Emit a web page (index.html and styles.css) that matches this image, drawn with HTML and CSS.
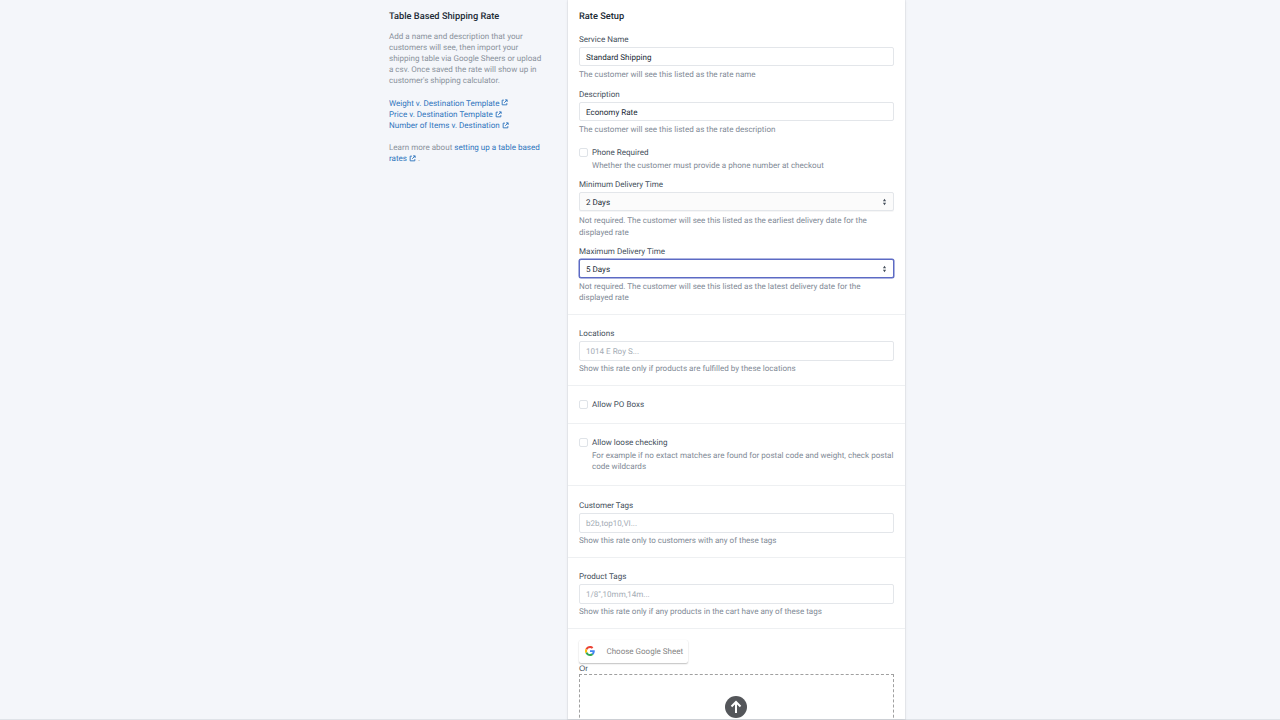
FILE: index.html
```html
<!DOCTYPE html>
<html lang="en">
  <head>
    <meta charset="UTF-8" />
    <meta name="viewport" content="width=device-width, initial-scale=1.0" />
    <title>Rate Setup</title>
    <link rel="stylesheet" href="styles.css">
  </head>
  <body>
    <div class="page">
      <div class="intro">
        <h2 class="intro-title">Table Based Shipping Rate</h2>
        <p class="intro-text">Add a name and description that your customers will see, then import your shipping table via Google Sheers or upload a csv. Once saved the rate will show up in customer's shipping calculator.</p>
        <ul class="intro-links">
          <li><a href="#">Weight v. Destination Template <svg class="ext" viewBox="0 0 12 12"><path d="M5 2H2v8h8V7M7 1.500h3.500V5M10.500 1.500L5.500 6.500"/></svg></a></li>
          <li><a href="#">Price v. Destination Template <svg class="ext" viewBox="0 0 12 12"><path d="M5 2H2v8h8V7M7 1.500h3.500V5M10.500 1.500L5.500 6.500"/></svg></a></li>
          <li><a href="#">Number of Items v. Destination <svg class="ext" viewBox="0 0 12 12"><path d="M5 2H2v8h8V7M7 1.500h3.500V5M10.500 1.500L5.500 6.500"/></svg></a></li>
        </ul>
        <p class="intro-text intro-learn">Learn more about <a href="#">setting up a table based rates <svg class="ext" viewBox="0 0 12 12"><path d="M5 2H2v8h8V7M7 1.500h3.500V5M10.500 1.500L5.500 6.500"/></svg></a> .</p>
      </div>

      <div class="card">
        <div class="section section-first">
          <h2 class="card-title">Rate Setup</h2>
          <div class="field">
            <div class="label">Service Name</div>
            <div class="input">Standard Shipping</div>
            <div class="help">The customer will see this listed as the rate name</div>
          </div>
          <div class="field">
            <div class="label">Description</div>
            <div class="input">Economy Rate</div>
            <div class="help">The customer will see this listed as the rate description</div>
          </div>
          <div class="check check-tight">
            <span class="box"></span>
            <div>
              <div class="check-label">Phone Required</div>
              <div class="help">Whether the customer must provide a phone number at checkout</div>
            </div>
          </div>
          <div class="field field-min">
            <div class="label">Minimum Delivery Time</div>
            <div class="input select">2 Days
              <svg class="updown" viewBox="0 0 6 10"><path d="M3 1l2 3H1zM3 9L1 6h4z"/></svg>
            </div>
            <div class="help">Not required. The customer will see this listed as the earliest delivery date for the displayed rate</div>
          </div>
          <div class="field field-max">
            <div class="label">Maximum Delivery Time</div>
            <div class="input select select-focus">5 Days
              <svg class="updown" viewBox="0 0 6 10"><path d="M3 1l2 3H1zM3 9L1 6h4z"/></svg>
            </div>
            <div class="help">Not required. The customer will see this listed as the latest delivery date for the displayed rate</div>
          </div>
        </div>

        <div class="section">
          <div class="label">Locations</div>
          <div class="input placeholder">1014 E Roy S...</div>
          <div class="help">Show this rate only if products are fulfilled by these locations</div>
        </div>

        <div class="section section-po">
          <div class="check">
            <span class="box"></span>
            <div class="check-label">Allow PO Boxs</div>
          </div>
        </div>

        <div class="section section-loose">
          <div class="check">
            <span class="box"></span>
            <div>
              <div class="check-label">Allow loose checking</div>
              <div class="help">For example if no extact matches are found for postal code and weight, check postal code wildcards</div>
            </div>
          </div>
        </div>

        <div class="section section-customer">
          <div class="label">Customer Tags</div>
          <div class="input placeholder">b2b,top10,VI...</div>
          <div class="help">Show this rate only to customers with any of these tags</div>
        </div>

        <div class="section">
          <div class="label">Product Tags</div>
          <div class="input placeholder">1/8",10mm,14m...</div>
          <div class="help">Show this rate only if any products in the cart have any of these tags</div>
        </div>

        <div class="section section-last">
          <div class="google-btn">
            <svg class="google-logo" viewBox="0 0 48 48">
              <path fill="#EA4335" d="M24 9.500c3.500 0 6.700 1.200 9.200 3.600l6.900-6.900C35.900 2.400 30.500 0 24 0 14.600 0 6.500 5.400 2.600 13.200l8 6.200C12.500 13.600 17.800 9.500 24 9.500z"/>
              <path fill="#4285F4" d="M47 24.500c0-1.600-.1-3.100-.4-4.500H24v9h12.900c-.6 3-2.300 5.500-4.800 7.200l7.700 6C44.300 38 47 31.800 47 24.500z"/>
              <path fill="#FBBC05" d="M10.600 28.600c-.5-1.400-.8-3-.8-4.600s.3-3.200.8-4.600l-8-6.200C.9 16.500 0 20.100 0 24s.9 7.500 2.600 10.800l8-6.200z"/>
              <path fill="#34A853" d="M24 48c6.500 0 11.900-2.100 15.900-5.800l-7.700-6c-2.200 1.500-4.900 2.300-8.100 2.300-6.200 0-11.500-4.200-13.400-9.900l-8 6.200C6.500 42.600 14.600 48 24 48z"/>
            </svg>
            <span>Choose Google Sheet</span>
          </div>
          <div class="or">Or</div>
          <div class="dropzone">
            <div class="upload-circle">
              <svg viewBox="0 0 22 22"><path d="M11 17V6M6.500 10.500L11 6l4.500 4.500"/></svg>
            </div>
          </div>
        </div>
      </div>
    </div>
  </body>
</html>
```

FILE: styles.css
```css
* {
  box-sizing: border-box;
}

html,
body {
  margin: 0;
  height: 720px;
  overflow: hidden;
}

body {
  background-color: #f4f6fa;
  font-family: Roboto, "Liberation Sans", sans-serif;
  font-size: 8.05px;
  line-height: 11.2px;
  color: #212b36;
  text-rendering: geometricPrecision;
}

a {
  color: #2f75bd;
  text-decoration: none;
}

.page {
  display: flex;
  height: 720px;
  padding-left: 389px;
  border-bottom: 1px solid #dfe3e8;
}

.intro {
  width: 156px;
  padding-top: 10.6px;
}

.intro-title,
.card-title {
  margin: 0;
  font-size: 9.25px;
  line-height: 12px;
  font-weight: 500;
  color: #212b36;
}

.intro-text {
  margin: 8px 0 0;
  color: #8a929c;
}

.intro-links {
  list-style: none;
  margin: 11.2px 0 0;
  padding: 0;
}

.intro-learn {
  margin-top: 10.8px;
}

.ext {
  width: 7px;
  height: 7px;
  fill: none;
  stroke: currentColor;
  stroke-width: 1.6;
  vertical-align: -0.5px;
}

.card {
  width: 337px;
  height: 719px;
  margin-left: 23px;
  background-color: #fff;
  box-shadow: 0 0 0 1px rgba(63, 63, 68, 0.05), 0 1px 3px 0 rgba(63, 63, 68, 0.1);
  overflow: hidden;
}

.section {
  padding: 13.4px 11px 10.6px;
  border-top: 1px solid #eef0f2;
}

.section-first {
  padding-top: 10.6px;
  padding-bottom: 10.8px;
  border-top: 0;
}

.section-po {
  padding-bottom: 12.4px;
}

.section-loose {
  padding-bottom: 12.7px;
}

.section-customer {
  padding-top: 14.4px;
}

.section-last {
  padding-top: 11px;
}

.field {
  margin-top: 9px;
}

.card-title + .field {
  margin-top: 11.4px;
}

.field-min {
  margin-top: 7.9px;
}

.field-max {
  margin-top: 8.1px;
}

.label {
  margin-bottom: 1.8px;
  color: #454f5b;
}

.input {
  position: relative;
  height: 19.5px;
  padding: 0 6px;
  line-height: 20px;
  border: 1px solid #e3e6ea;
  border-radius: 2px;
  background-color: #fff;
  color: #212b36;
}

.select {
  background-color: #fbfbfb;
  box-shadow: 0 1px 0 rgba(22, 29, 37, 0.04);
}

.select-focus {
  background-color: #fff;
  border-color: #5c6ac4;
  box-shadow: 0 0 0 0.5px #5c6ac4;
}

.placeholder {
  color: #a4acb5;
}

.updown {
  position: absolute;
  top: 5px;
  right: 6px;
  width: 5px;
  height: 8px;
  fill: #454f5b;
}

.help {
  margin-top: 2.3px;
  color: #7f8a96;
}

.field-min .help {
  margin-top: 4px;
}

.check .help {
  margin-top: 1.3px;
}

.check {
  display: flex;
  gap: 4px;
}

.check-tight {
  margin-top: 12.4px;
}

.box {
  flex: none;
  width: 9px;
  height: 9px;
  margin-top: 0.5px;
  border: 1px solid #dfe3e8;
  border-radius: 2px;
  background-color: #fff;
}

.check-label {
  color: #454f5b;
}

.google-btn {
  display: flex;
  align-items: center;
  width: 109px;
  height: 23px;
  background-color: #fff;
  border-radius: 2px;
  box-shadow: 0 1px 1.5px rgba(0, 0, 0, 0.24), 0 0 1px rgba(0, 0, 0, 0.08);
  color: #858585;
  font-size: 8px;
}

.google-logo {
  width: 10px;
  height: 10px;
  margin: 0 11.5px 0 6px;
}

.or {
  height: 11px;
  line-height: 12.5px;
  color: #454f5b;
  font-family: "Liberation Sans", sans-serif;
}

.dropzone {
  display: flex;
  justify-content: center;
  height: 120px;
  padding-top: 21px;
  border: 1px dashed #a0a0a0;
}

.upload-circle {
  width: 22px;
  height: 22px;
  margin-right: 1px;
  border-radius: 50%;
  background-color: #54565a;
}

.upload-circle svg {
  display: block;
  width: 22px;
  height: 22px;
  fill: none;
  stroke: #fff;
  stroke-width: 2;
}
```
